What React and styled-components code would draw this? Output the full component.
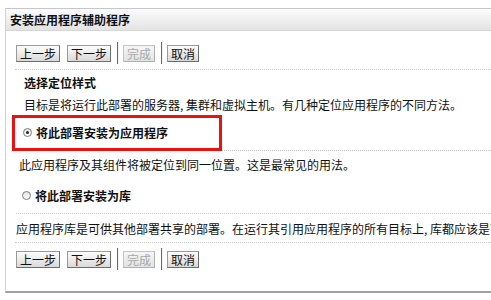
import React from 'react';
import styled, { createGlobalStyle } from "styled-components";

const GlobalStyle = createGlobalStyle`
    body {
        margin: 0;
        background: #fff;
        font-family: "Noto Sans CJK SC", "Noto Sans", sans-serif;
        font-size: 12px;
        color: #111;
        overflow: hidden;
    }
`;

const ButtonBar = ({top}) => (
    <Bar $top={top}>
        <Button>上一步</Button>
        <Button $gap={7}>下一步</Button>
        <Separator/>
        <Button disabled>完成</Button>
        <Separator/>
        <Button>取消</Button>
    </Bar>
);

const App = () => {
    return (
        <>
            <GlobalStyle/>
            <Frame>
                <TitleBar>安装应用程序辅助程序</TitleBar>
                <Content>
                    <ButtonBar top={11}/>
                    <Divider $top={5}/>
                    <Heading>选择定位样式</Heading>
                    <Text $top={8} $indent={8}>目标是将运行此部署的服务器, 集群和虚拟主机。有几种定位应用程序的不同方法。</Text>
                    <OptionRow $top={3}>
                        <Radio $checked $indent={7}/>
                        <OptionLabel>将此部署安装为应用程序</OptionLabel>
                        <Highlight/>
                    </OptionRow>
                    <Text $top={7} $indent={3}>此应用程序及其组件将被定位到同一位置。这是最常见的用法。</Text>
                    <OptionRow $top={6}>
                        <Radio $indent={6}/>
                        <OptionLabel>将此部署安装为库</OptionLabel>
                    </OptionRow>
                    <Text $top={8} $indent={0}>应用程序库是可供其他部署共享的部署。在运行其引用应用程序的所有目标上, 库都应该是可用的。</Text>
                    <Divider $top={6}/>
                    <ButtonBar top={5}/>
                </Content>
            </Frame>
        </>
    );
};

const Frame = styled.div`
    box-sizing: border-box;
    margin: 8px 0 0 5px;
    height: 285px;
    border-top: 1px solid #c4c6cc;
    border-left: 1px solid #d2d2d2;
    border-bottom: 2px solid #a2a2a2;
    box-shadow: 0 2px 0 #d6d6d6;
    overflow: hidden;
`;

const TitleBar = styled.div`
    height: 21px;
    line-height: 21px;
    padding-left: 4px;
    font-weight: bold;
    color: #111;
    background: linear-gradient(#fcfcfc, #e3e3e3);
    border-bottom: 1px solid #d6d6d6;
`;

const Content = styled.div`
    padding-left: 10px;
`;

const Bar = styled.div`
    display: flex;
    align-items: center;
    height: 22px;
    margin-top: ${p => p.$top}px;
`;

const Button = styled.button`
    box-sizing: border-box;
    height: 17px;
    margin: 0 0 0 ${p => p.$gap || 0}px;
    padding: 0 3px;
    font-family: inherit;
    font-size: 12px;
    line-height: 15px;
    color: ${p => p.disabled ? '#a8a8a8' : '#111'};
    background: ${p => p.disabled
        ? 'linear-gradient(#f6f6f6, #e2e2e2)'
        : 'linear-gradient(#fdfdfd, #d9d9d9)'};
    border: 1px solid ${p => p.disabled ? '#c4c4c4' : '#9a9a9a'};
    border-right-color: ${p => p.disabled ? '#b0b0b0' : '#6e6e6e'};
    border-bottom-color: ${p => p.disabled ? '#b0b0b0' : '#6e6e6e'};
    border-radius: 0;
`;

const Separator = styled.span`
    width: 1px;
    height: 22px;
    margin: 0 4px 0 6px;
    background: #6a6a6a;
    border-right: 1px solid #f0f0f0;
`;

const Divider = styled.div`
    margin: ${p => p.$top}px 0 0 -1px;
    border-top: 1px dotted #c6c6c6;
`;

const Heading = styled.div`
    margin: 6px 0 0 8px;
    line-height: 14px;
    font-weight: bold;
`;

const Text = styled.div`
    margin: ${p => p.$top}px 0 0 ${p => p.$indent}px;
    line-height: 14px;
    white-space: nowrap;
`;

const OptionRow = styled.div`
    position: relative;
    display: flex;
    align-items: center;
    height: 35px;
    margin-top: ${p => p.$top}px;
    border-bottom: 1px dotted #c6c6c6;
`;

const Radio = styled.span`
    position: relative;
    box-sizing: border-box;
    width: 9px;
    height: 9px;
    margin: 0 4px 0 ${p => p.$indent}px;
    border: 1px solid #7a7a7a;
    border-radius: 50%;
    background: linear-gradient(#e2e2e2, #ffffff);

    &::after {
        content: "";
        display: ${p => p.$checked ? 'block' : 'none'};
        position: absolute;
        left: 2px;
        top: 2px;
        width: 3px;
        height: 3px;
        border-radius: 50%;
        background: #222;
    }
`;

const OptionLabel = styled.span`
    line-height: 14px;
    font-weight: bold;
`;

const Highlight = styled.div`
    position: absolute;
    left: -4px;
    top: 0;
    box-sizing: border-box;
    width: 210px;
    height: 36px;
    border: 3px solid #ec1010;
    pointer-events: none;
`;

export default App;
